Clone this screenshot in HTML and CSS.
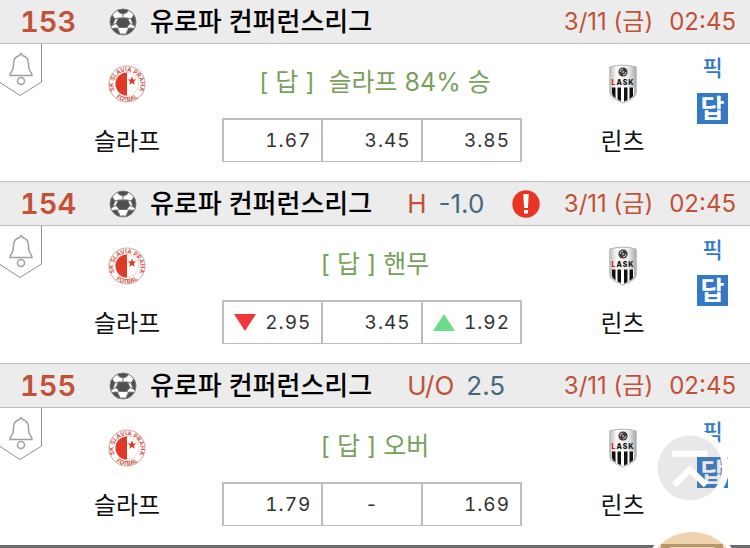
FILE: index.html
```html
<!DOCTYPE html>
<html lang="ko">
<head>
<meta charset="utf-8">
<meta name="viewport" content="width=device-width, initial-scale=1">
<title>유로파 컨퍼런스리그</title>
<link rel="stylesheet" href="styles.css">
</head>
<body>
<svg class="defs" aria-hidden="true">
  <defs>
    <linearGradient id="metal" x1="0" x2="1" y1="0" y2="0">
      <stop offset="0" stop-color="#bdbdbd"/><stop offset=".25" stop-color="#fafafa"/><stop offset=".7" stop-color="#ececec"/><stop offset="1" stop-color="#a9a9a9"/>
    </linearGradient>
    <clipPath id="ball-clip"><circle cx="14" cy="14" r="13"/></clipPath>
    <clipPath id="shield-clip"><path d="M3 23.500h22v6q0 4-11 8.500Q3 33.500 3 29.500z"/></clipPath>
    <path id="arc-top" d="M8.500 28.500A13.500 13.500 0 1 1 29.500 28.500"/>
    <path id="arc-bottom" d="M5 29A17 17 0 0 0 33 29"/>
    <symbol id="ball" viewBox="0 0 28 28">
      <circle cx="14" cy="14" r="13" fill="#fff"/>
      <g clip-path="url(#ball-clip)" fill="#505050" stroke="#707070" stroke-width="1">
        <path d="M9.500 10h9l2.500 5.500-3.500 4h-7l-3.500-4z"/>
        <path d="M7 0h14l-3 4.500L14 6l-4-1.500z"/>
        <path d="M0 8l3-1 3 4L3.500 17.500 0 18z"/>
        <path d="M28 8l-3-1-3 4L24.500 17.500 28 18z"/>
        <path d="M2 20.500l6-.5 2.500 4.500V28H4z"/>
        <path d="M26 20.500l-6-.5-2.500 4.500V28H24z"/>
        <path fill="none" d="M14 6v4M6 11l3.500-1M22 11l-3.500-1M7 15.500L3.500 17M21 15.500L24.500 17M10.500 19.500L8 20.500M17.500 19.500l2.500 1M10.500 26h7"/>
      </g>
      <circle cx="14" cy="14" r="13" fill="none" stroke="#777" stroke-width="1"/>
    </symbol>
    <symbol id="slavia" viewBox="0 0 38 38">
      <circle cx="19" cy="19" r="18" fill="#fff" stroke="#c9a5a0" stroke-width="1"/>
      <circle cx="19" cy="19" r="11.500" fill="#fff" stroke="#f0c9c4" stroke-width=".7"/>
      <path d="M19 7.500a11.500 11.500 0 0 0 0 23z" fill="#e03a26"/>
      <path d="M24 11.500l1.200 2.900 3.100.2-2.400 2 .8 3.100-2.700-1.700-2.700 1.700.8-3.100-2.400-2 3.100-.2z" fill="#e03a26"/>
      <text class="crest-text"><textPath href="#arc-top" startOffset="50%" text-anchor="middle">SK SLAVIA PRAHA</textPath></text>
      <text class="crest-text"><textPath href="#arc-bottom" startOffset="50%" text-anchor="middle">FOTBAL</textPath></text>
    </symbol>
    <symbol id="lask" viewBox="0 0 28 40">
      <path d="M.800 3Q14-.800 27.200 3V28.500q0 5.500-13.200 10.500Q.800 34 .800 28.500z" fill="url(#metal)" stroke="#b2b2b2" stroke-width="1"/>
      <circle cx="14" cy="8" r="4.600" fill="#3a3a3a"/>
      <path d="M11 8a3 3 0 0 1 3-3M17 8a3 3 0 0 1-3 3" fill="none" stroke="#ccc" stroke-width="1"/>
      <circle cx="14" cy="8" r="1.300" fill="#999"/><path d="M10 9l2 2" stroke="#c33"/>
      <text class="shield-text" x="14" y="20.500" text-anchor="middle"><tspan fill="#d22">L</tspan>ASK</text>
      <g clip-path="url(#shield-clip)"><path fill="#fff" d="M3 22h22v18H3z"/><path d="M3 22h3.500v18H3zM8.500 22H12v18H8.500zM15 22h3.500v18H15zM20.500 22H24v18h-3.500z" fill="#111"/></g>
    </symbol>
    <symbol id="bell" viewBox="0 0 42 53">
      <path d="M41.500 0V38L20 51.500 0 38.500" fill="none" stroke="#8f8f8f" stroke-width="1"/>
      <path d="M21 9.500c-1 0-1 1.500-1.500 2-3.500 1-6 4-6 8 0 5-.5 7-2.500 9q-1 1.500-1 3h22q0-1.500-1-3c-2-2-2.500-4-2.500-9 0-4-2.500-7-6-8-.5-.5-.5-2-1.500-2z" fill="none" stroke="#a0a0a0" stroke-width="1.500"/>
      <circle cx="21" cy="37" r="3.500" fill="none" stroke="#a0a0a0" stroke-width="1.500"/>
    </symbol>
  </defs>
</svg>

<main>
  <article class="match">
    <header class="match-head">
      <strong class="number">153</strong>
      <svg class="ball" aria-hidden="true"><use href="#ball"/></svg>
      <h2 class="league">유로파 컨퍼런스리그</h2>
      <p class="when"><span>3/11 (금)</span><span>02:45</span></p>
    </header>
    <div class="match-body">
      <button class="alarm" type="button" aria-label="알림"><svg><use href="#bell"/></svg></button>
      <div class="team home"><svg class="crest"><use href="#slavia"/></svg><span>슬라프</span></div>
      <div class="market">
        <p class="answer">[ 답 ]  슬라프 84% 승</p>
        <ul class="odds"><li>1.67</li><li>3.45</li><li>3.85</li></ul>
      </div>
      <div class="team away"><svg class="crest shield"><use href="#lask"/></svg><span>린츠</span></div>
      <div class="actions"><button class="pick" type="button">픽</button><button class="reply" type="button">답</button></div>
    </div>
  </article>

  <article class="match">
    <header class="match-head">
      <strong class="number">154</strong>
      <svg class="ball" aria-hidden="true"><use href="#ball"/></svg>
      <h2 class="league">유로파 컨퍼런스리그</h2>
      <p class="line"><span class="kind">H</span><span>-1.0</span></p>
      <svg class="warn" viewBox="0 0 28 28" aria-hidden="true"><circle cx="14" cy="14" r="13.700" fill="#e93323"/><path d="M11.300 4h5.400l-.7 14h-4zM12 20h4v3.500h-4z" fill="#fff"/></svg>
      <p class="when"><span>3/11 (금)</span><span>02:45</span></p>
    </header>
    <div class="match-body">
      <button class="alarm" type="button" aria-label="알림"><svg><use href="#bell"/></svg></button>
      <div class="team home"><svg class="crest"><use href="#slavia"/></svg><span>슬라프</span></div>
      <div class="market">
        <p class="answer">[ 답 ] 핸무</p>
        <ul class="odds">
          <li><svg class="trend" viewBox="0 0 22 17"><path d="M0 0h22L11 17z" fill="#ee363b"/></svg>2.95</li>
          <li>3.45</li>
          <li><svg class="trend" viewBox="0 0 22 17"><path d="M0 17h22L11 0z" fill="#6edb87"/></svg>1.92</li>
        </ul>
      </div>
      <div class="team away"><svg class="crest shield"><use href="#lask"/></svg><span>린츠</span></div>
      <div class="actions"><button class="pick" type="button">픽</button><button class="reply" type="button">답</button></div>
    </div>
  </article>

  <article class="match">
    <header class="match-head">
      <strong class="number">155</strong>
      <svg class="ball" aria-hidden="true"><use href="#ball"/></svg>
      <h2 class="league">유로파 컨퍼런스리그</h2>
      <p class="line"><span class="kind">U/O</span><span>2.5</span></p>
      <p class="when"><span>3/11 (금)</span><span>02:45</span></p>
    </header>
    <div class="match-body">
      <button class="alarm" type="button" aria-label="알림"><svg><use href="#bell"/></svg></button>
      <div class="team home"><svg class="crest"><use href="#slavia"/></svg><span>슬라프</span></div>
      <div class="market">
        <p class="answer">[ 답 ] 오버</p>
        <ul class="odds"><li>1.79</li><li class="none">-</li><li>1.69</li></ul>
      </div>
      <div class="team away"><svg class="crest shield"><use href="#lask"/></svg><span>린츠</span></div>
      <div class="actions"><button class="pick" type="button">픽</button><button class="reply" type="button">답</button></div>
    </div>
  </article>
</main>

<footer class="bottom-bar"></footer>

<button class="to-top" type="button" aria-label="맨 위로">
  <svg viewBox="0 0 78 78">
    <circle cx="39" cy="39" r="35.500" fill="none" stroke="#fff" stroke-width="7"/>
    <circle cx="39" cy="39" r="32.500" fill="#828282" fill-opacity=".18"/>
    <path d="M21 24.800h35.500M23 56l16-15.500L55 56" fill="none" stroke="#fff" stroke-width="6"/>
  </svg>
</button>
<button class="floating-menu" type="button" aria-label="메뉴">
  <svg viewBox="0 0 100 100">
    <circle cx="50" cy="50" r="50" fill="#fff"/>
    <circle cx="50" cy="50" r="46" fill="#efd2ae"/>
    <path d="M19 16h62v60H19z" fill="#b8966c"/>
    <path d="M28 19h45v50H28z" fill="#e8d5ba"/>
  </svg>
</button>
</body>
</html>
```
FILE: styles.css
```css
* { box-sizing: border-box; }

body {
  margin: 0;
  min-height: 100vh;
  display: flex;
  flex-direction: column;
  overflow: hidden;
  background: #fff;
  color: #111;
  font-family: Inter, "Noto Sans CJK KR", sans-serif;
}

h2, p, ul { margin: 0; padding: 0; }
ul { list-style: none; }
svg { display: block; }
.defs { position: absolute; width: 0; height: 0; }

button {
  margin: 0;
  padding: 0;
  border: 0;
  background: none;
  font-family: inherit;
  cursor: pointer;
}

.match-head {
  display: flex;
  align-items: center;
  height: 45px;
  padding: 0 14px 0 20px;
  background: #ececec;
  border-top: 1px solid #bdbdbd;
  border-bottom: 1px solid #bdbdbd;
  line-height: 40px;
  white-space: nowrap;
}
.match:first-child .match-head { height: 44px; border-top: 0; }

.number {
  width: 89px;
  color: #c25136;
  font-size: 29px;
  font-weight: 600;
  font-variant-numeric: tabular-nums;
}
.ball { width: 28px; height: 28px; margin-right: 13px; }
.league {
  color: #000;
  font-size: 26px;
  font-weight: 500;
}
.line {
  display: flex;
  gap: 12px;
  margin-left: 35px;
  color: #45687c;
  font-size: 26px;
}
.kind { color: #c25136; }
.warn { width: 28px; height: 28px; margin-left: 28px; }
.when {
  display: flex;
  align-items: baseline;
  gap: 16px;
  margin-left: auto;
  color: #c25136;
  font-size: 24px;
}

.match-body {
  position: relative;
  display: grid;
  grid-template-columns: 222fr 300fr 175fr 53fr;
  min-height: 137px;
}
.alarm { position: absolute; top: 0; left: 0; }
.alarm svg { width: 42px; height: 53px; }

.team {
  display: flex;
  flex-direction: column;
  align-items: center;
  gap: 19px;
  padding-top: 20px;
  font-size: 24px;
  line-height: 38px;
}
.home { padding-left: 32px; }
.away { padding-left: 26px; }
.crest { width: 38px; height: 40px; }
.shield { width: 28px; }
.crest-text { fill: #d9402f; font-size: 6px; font-weight: 600; }
.shield-text { fill: #111; font-size: 7px; font-weight: 800; letter-spacing: 1px; }

.market { padding-top: 20px; }
.answer {
  padding-left: 6px;
  color: #79a05c;
  font-size: 25px;
  line-height: 36px;
  text-align: center;
  white-space: pre;
}
.odds {
  display: grid;
  grid-template-columns: repeat(3, 1fr);
  height: 44px;
  margin-top: 18px;
  border: solid #bdbdbd;
  border-width: 2px 2px 1px 0;
}
.odds li {
  display: flex;
  align-items: center;
  justify-content: flex-end;
  padding-right: 10px;
  border-left: 2px solid #bdbdbd;
  color: #333;
  font-size: 19px;
  font-variant-numeric: tabular-nums;
  letter-spacing: 1px;
}
.odds .none { justify-content: center; padding: 0; }
.trend { width: 22px; height: 17px; margin: 0 auto 0 10px; }

.actions {
  display: flex;
  flex-direction: column;
  align-items: flex-start;
  gap: 10px;
  padding-top: 9px;
}
.pick, .reply { width: 31px; font-weight: 500; }
.pick { height: 30px; color: #3478c8; font-size: 22px; line-height: 30px; }
.reply { height: 31px; background: #3478c8; color: #fff; font-size: 26px; font-weight: 700; line-height: 31px; }

.bottom-bar { flex: 1; min-height: 4px; background: #6c6c6c; }

.to-top { position: fixed; right: 21px; bottom: 41px; }
.to-top svg { width: 78px; height: 78px; }
.floating-menu { position: fixed; right: 8px; bottom: -80px; }
.floating-menu svg { width: 100px; height: 100px; }
```
